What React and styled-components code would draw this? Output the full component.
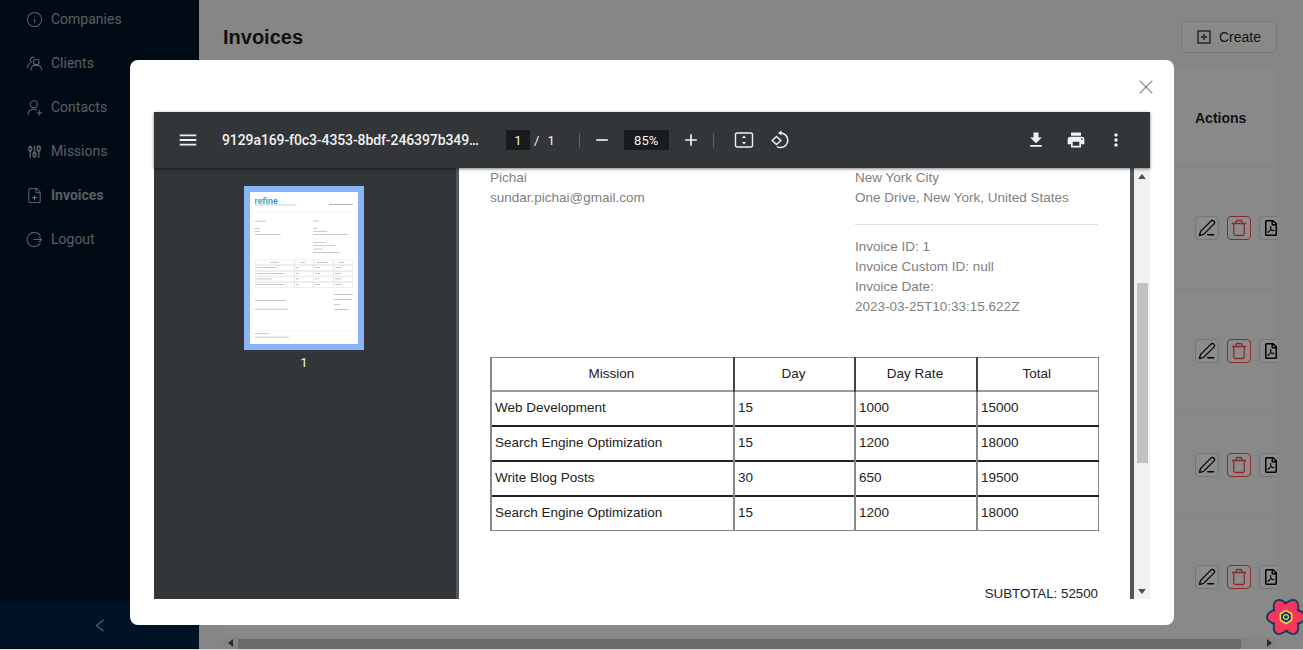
import React from 'react';
import styled, { createGlobalStyle } from 'styled-components';
import { Info, FilePlus, PenLine, Trash, X } from 'lucide-react';
import { TbChartCandle } from 'react-icons/tb';
import { FaRegFilePdf } from 'react-icons/fa';

const GlobalStyle = createGlobalStyle`
  html, body {
    margin: 0;
    padding: 0;
    height: 100%;
    overflow: hidden;
    background: #d8dcdc;
    font-family: "Liberation Sans", Arial, sans-serif;
  }
`;

const Layout = styled.div`
  display: flex;
  height: 649px;
  width: 1303px;
  background: #f5f5f5;
`;

const Sider = styled.aside`
  width: 199px;
  flex: none;
  background: #001529;
  display: flex;
  flex-direction: column;
  justify-content: space-between;
  overflow: hidden;
`;

const Menu = styled.nav`
  display: flex;
  flex-direction: column;
  gap: 4px;
  margin-top: -1px;
`;

const MenuItem = styled.div`
  height: 40px;
  display: flex;
  align-items: center;
  gap: 8px;
  padding-left: 26px;
  font: ${(p) => (p.$active ? 700 : 400)} 14px Roboto, sans-serif;
  color: rgba(255, 255, 255, 0.65);
`;

const Trigger = styled.div`
  height: 48px;
  background: #002140;
  display: flex;
  align-items: center;
  justify-content: center;
  color: rgba(255, 255, 255, 0.65);
`;

const Main = styled.main`
  flex: 1;
  min-width: 0;
  padding: 21px 26px 0 24px;
  display: flex;
  flex-direction: column;
`;

const PageHead = styled.header`
  display: flex;
  justify-content: space-between;
  align-items: center;
  height: 31px;
  margin-bottom: 17px;
`;

const Title = styled.h1`
  margin: 2px 0 0;
  font-size: 20px;
  font-weight: 700;
  color: rgba(0, 0, 0, 0.88);
`;

const CreateButton = styled.button`
  width: 96px;
  height: 32px;
  border: 1px solid #d9d9d9;
  border-radius: 6px;
  background: #fafafa;
  display: flex;
  align-items: center;
  justify-content: center;
  gap: 8px;
  font: 14px "Liberation Sans", sans-serif;
  color: rgba(0, 0, 0, 0.88);
  padding: 0;
`;

const Card = styled.section`
  flex: 1;
  min-height: 0;
  background: #fafafa;
  overflow: hidden;
  display: flex;
  flex-direction: column;
  align-items: flex-end;
`;

const Row = styled.div`
  width: 100%;
  height: ${(p) => p.$h}px;
  flex: none;
  box-sizing: border-box;
  border-bottom: 1px solid #eee;
  display: flex;
  align-items: center;
  padding-left: 972px;
  gap: 8px;
`;

const HeaderCell = styled.span`
  font-size: 14px;
  font-weight: 700;
  color: rgba(0, 0, 0, 0.88);
  position: relative;

  &::before {
    content: '';
    position: absolute;
    left: -17px;
    top: -3px;
    width: 1px;
    height: 23px;
    background: #f2f2f2;
  }
`;

const ActionButton = styled.button`
  width: 24px;
  height: 24px;
  flex: none;
  padding: 0;
  border-radius: 4px;
  border: 1px solid ${(p) => (p.$danger ? '#ff4d4f' : '#d9d9d9')};
  color: ${(p) => (p.$danger ? '#ff4d4f' : '#000')};
  background: #fff;
  display: flex;
  align-items: center;
  justify-content: center;
`;

const HScroll = styled.div`
  height: 12px;
  flex: none;
  background: #f1f1f1;
  display: flex;
  align-items: center;
  padding: 0 5px;
  box-sizing: border-box;
`;

const HThumb = styled.div`
  height: 10px;
  width: 1003px;
  margin: 2px 0 0 5px;
  background: #c1c1c1;
`;

const HArrow = styled.svg`
  width: 5px;
  height: 8px;
  fill: #505050;
  margin-left: ${(p) => (p.$end ? 'auto' : '0')};
`;

const Mask = styled.div`
  position: fixed;
  left: 0;
  top: 0;
  right: 0;
  height: 649px;
  background: rgba(0, 0, 0, 0.45);
`;

const Modal = styled.div`
  position: fixed;
  left: 130px;
  top: 60px;
  width: 1044px;
  height: 565px;
  box-sizing: border-box;
  padding: 52px 24px 26px;
  background: #fff;
  border-radius: 8px;
`;

const Close = styled.div`
  position: absolute;
  top: 15px;
  right: 16px;
  color: rgba(0, 0, 0, 0.45);
  display: flex;
`;

const Viewer = styled.div`
  height: 100%;
  display: flex;
  flex-direction: column;
  background: #323639;
`;

const Toolbar = styled.div`
  height: 56px;
  flex: none;
  display: flex;
  align-items: center;
  padding: 0 24px 0 23px;
  color: #f1f1f1;
  font: 13px Roboto, sans-serif;
  box-shadow: 0 1px 3px rgba(0, 0, 0, 0.5);
  position: relative;
  z-index: 1;
`;

const MatIcon = styled.svg`
  width: ${(p) => p.$size || 20}px;
  height: ${(p) => p.$size || 20}px;
  fill: ${(p) => (p.$outline ? 'none' : '#f1f1f1')};
  flex: none;
`;

const DocName = styled.span`
  width: 284px;
  flex: none;
  margin-left: 23px;
  font-size: 14px;
  font-weight: 500;
  letter-spacing: -0.1px;
  white-space: nowrap;
`;

const PageField = styled.span`
  width: 24px;
  height: 20px;
  background: #191b1c;
  display: flex;
  align-items: center;
  justify-content: center;
  margin-left: ${(p) => p.$ml || 0}px;
`;

const Slash = styled.span`
  margin-left: 4px;
  margin-right: 8px;
`;

const Sep = styled.span`
  width: 1px;
  height: 15px;
  background: #5f6368;
  margin: 0 ${(p) => p.$r || 12}px 0 ${(p) => p.$l || 24}px;
`;

const ZoomField = styled(PageField)`
  width: 45px;
`;

const Spacer = styled.span`
  flex: 1;
`;

const ToolGroup = styled.div`
  display: flex;
  align-items: center;
  gap: ${(p) => p.$gap}px;
  margin-left: ${(p) => p.$ml || 0}px;
`;

const ViewerBody = styled.div`
  flex: 1;
  min-height: 0;
  display: flex;
`;

const Thumbs = styled.div`
  width: 302px;
  flex: none;
  display: flex;
  flex-direction: column;
  align-items: center;
  padding: 18px 2px 0 0;
  box-sizing: border-box;
`;

const Thumb = styled.div`
  width: 120px;
  height: 164px;
  background: #8ab4f8;
  display: flex;
  align-items: center;
  justify-content: center;
`;

const ThumbSvg = styled.svg`
  width: 108px;
  height: 152px;
  background: #fff;
  filter: blur(0.35px);
`;

const ThumbNum = styled.div`
  margin-top: 5px;
  color: #f1f1f1;
  font: 13px Roboto, sans-serif;
`;

const PageArea = styled.div`
  flex: 1;
  min-width: 0;
  display: flex;
  background: #525659;
  padding-left: 3px;
`;

const Paper = styled.div`
  width: 671px;
  flex: none;
  background: #fff;
  overflow: hidden;
  box-sizing: border-box;
  padding: 0 32px 0 31px;
  font-size: 13.5px;
  color: #808080;
  line-height: 20px;
`;

const Columns = styled.div`
  display: flex;
`;

const LeftCol = styled.div`
  width: 365px;
  flex: none;
`;

const RightCol = styled.div`
  flex: 1;
`;

const Rule = styled.div`
  height: 1px;
  background: #ddd;
  margin: 16px 0 12px;
`;

const InvoiceTable = styled.table`
  width: 607px;
  margin-top: 40px;
  border-collapse: collapse;
  table-layout: fixed;
  color: #222;
`;

const Th = styled.th`
  font-weight: 400;
  height: 32px;
  padding: 0 2px 0 0;
  text-align: center;
  border: 1px solid #888;
  border-left: 2px solid ${(p) => (p.$first ? '#888' : '#444')};
`;

const Td = styled.td`
  height: 31px;
  padding: 0 4px 2px 3px;
  box-sizing: content-box;
  border: 1px solid #888;
  border-left-width: 2px;
  border-top: 2px solid ${(p) => (p.$dark ? '#222' : '#999')};
`;

const Subtotal = styled.div`
  margin-top: 53px;
  text-align: right;
  color: #222;
  font-size: 13.3px;
`;

const VScroll = styled.div`
  width: 16px;
  flex: none;
  margin-left: 4px;
  background: #f1f1f1;
  display: flex;
  flex-direction: column;
  align-items: center;
  position: relative;
`;

const ScrollArrow = styled.svg`
  width: 8px;
  height: 5px;
  fill: #505050;
  position: absolute;
  left: 4px;
  ${(p) => (p.$down ? 'bottom: 5px;' : 'top: 6px;')}
`;

const VThumb = styled.div`
  width: 11px;
  height: 180px;
  margin-top: 115px;
  background: #c1c1c1;
`;

const Atom = styled.svg`
  position: fixed;
  left: 1265px;
  top: 596px;
  width: 42px;
  height: 42px;
`;

const rows = [
  ['Web Development', '15', '1000', '15000'],
  ['Search Engine Optimization', '15', '1200', '18000'],
  ['Write Blog Posts', '30', '650', '19500'],
  ['Search Engine Optimization', '15', '1200', '18000'],
];

const LineIcon = ({ children }) => (
  <svg width="17" height="17" viewBox="0 0 24 24" fill="none" stroke="currentColor" strokeWidth="1.6" strokeLinecap="round">
    {children}
  </svg>
);

const nav = [
  ['Companies', <Info size={17} strokeWidth={1.5} />],
  ['Clients', (
    <LineIcon>
      <circle cx="14.5" cy="10" r="4" />
      <path d="M7 21c0-4 3-6.5 7.5-6.5S22 17 22 21" />
      <path d="M11.5 3.4A4 4 0 0 0 6 7a4 4 0 0 0 2 3.3M2 18c0-3 1.3-5 3.6-6" />
    </LineIcon>
  )],
  ['Contacts', (
    <LineIcon>
      <circle cx="11" cy="7.5" r="5" />
      <path d="M3 22c0-5 3.5-7.5 8-7.5 1.5 0 2.8.3 4 1M19 16.5v6M16 19.5h6" />
    </LineIcon>
  )],
  ['Missions', <TbChartCandle size={17} />],
  ['Invoices', <FilePlus size={17} strokeWidth={1.5} />, true],
  ['Logout', (
    <LineIcon>
      <path d="M20 6.5A10 10 0 1 0 20 17.5M11 12h11M19 9l3 3-3 3" />
    </LineIcon>
  )],
];

const tableRowsY = [68, 73.7, 79.3, 85, 90.7];
const tableColsX = [5.3, 44.7, 63.3, 83.3];
const tableColsW = [39.4, 18.6, 20, 19.4];

const Actions = () => (
  <>
    <ActionButton><PenLine size={18} strokeWidth={1.7} /></ActionButton>
    <ActionButton $danger><Trash size={18} strokeWidth={1.7} /></ActionButton>
    <ActionButton><FaRegFilePdf size={16} /></ActionButton>
  </>
);

const Material = ({ d, size }) => (
  <MatIcon viewBox="0 0 24 24" $size={size}><path d={d} /></MatIcon>
);

const thumbLines = [
  [4.7, 28.7, 11], [63.3, 28.7, 6],
  [4.7, 36, 5], [4.7, 39, 5], [4.7, 42, 26],
  [63.3, 36, 4], [63.3, 39, 14], [63.3, 42, 35],
  [63.3, 50, 12], [63.3, 53.3, 22], [63.3, 56.7, 9], [63.3, 60, 27],
  [4.7, 108, 31], [4.7, 116.7, 33],
  [84, 102, 19], [84, 107, 18], [84, 112, 6], [84, 117, 15],
  [4.7, 141.3, 14], [4.7, 144.7, 34],
  [6.5, 75, 20], [6.5, 81, 28], [6.5, 86.5, 16], [6.5, 92, 28],
  [46, 75, 3], [46, 81, 3], [46, 86.5, 3], [46, 92, 3],
  [65, 75, 5], [65, 81, 5], [65, 86.5, 4], [65, 92, 5],
  [85, 75, 6], [85, 81, 6], [85, 86.5, 6], [85, 92, 6],
  [20, 70, 9], [50, 70, 5], [67, 70, 11], [89, 70, 5],
];

const ThumbPage = () => (
  <ThumbSvg viewBox="0 0 108 152">
    <defs>
      <linearGradient id="logoFill" x1="0" x2="1" y1="0" y2="0">
        <stop offset="0" stopColor="#45c4a0" />
        <stop offset="1" stopColor="#3a8fe8" />
      </linearGradient>
    </defs>
    <text x="4.5" y="11.5" fontSize="9" fontWeight="700" fontFamily="Roboto, sans-serif" fill="url(#logoFill)">refine</text>
    <rect x="4.7" y="12.5" width="42" height="0.9" fill="#a8d8f0" />
    <rect x="79" y="12" width="24" height="0.9" fill="#aaa" />
    <rect x="5" y="20.3" width="98" height="0.4" fill="#eee" />
    <rect x="63" y="46.7" width="40" height="0.4" fill="#eee" />
    <rect x="5" y="138" width="98" height="0.4" fill="#eee" />
    {thumbLines.map(([x, y, w], i) => <rect key={i} x={x} y={y} width={w} height="0.8" fill="#bbb" />)}
    {tableRowsY.map((y) => tableColsX.map((x, i) => (
      <rect key={`${y}-${x}`} x={x} y={y} width={tableColsW[i]} height="4.6" fill="none" stroke="#ddd" strokeWidth="0.5" />
    )))}
  </ThumbSvg>
);

export default function App() {
  return (
    <>
      <GlobalStyle />
      <Layout>
        <Sider>
          <Menu>
            {nav.map(([label, icon, active]) => (
              <MenuItem key={label} $active={active}>{icon}{label}</MenuItem>
            ))}
          </Menu>
          <Trigger>
            <svg width="10" height="13" viewBox="0 0 10 13" fill="none" stroke="currentColor" strokeWidth="1.2">
              <path d="M8.5 1L1.5 6.5l7 5.5" />
            </svg>
          </Trigger>
        </Sider>
        <Main>
          <PageHead>
            <Title>Invoices</Title>
            <CreateButton>
              <svg width="14" height="14" viewBox="0 0 14 14" fill="none" stroke="currentColor">
                <rect x="1" y="1" width="12" height="12" strokeWidth="1.2" />
                <path d="M7 4v6M4 7h6" strokeWidth="1.8" opacity="0.7" />
              </svg>
              Create
            </CreateButton>
          </PageHead>
          <Card>
            <Row $h={99}><HeaderCell>Actions</HeaderCell></Row>
            <Row $h={121}><Actions /></Row>
            <Row $h={125}><Actions /></Row>
            <Row $h={102}><Actions /></Row>
            <Row $h={122}><Actions /></Row>
          </Card>
          <HScroll>
            <HArrow viewBox="0 0 5 8"><path d="M0 4l5-4v8z" /></HArrow>
            <HThumb />
            <HArrow $end viewBox="0 0 5 8"><path d="M5 4L0 0v8z" /></HArrow>
          </HScroll>
        </Main>
      </Layout>
      <Mask />
      <Modal>
        <Close><X size={24} strokeWidth={1.1} /></Close>
        <Viewer>
          <Toolbar>
            <Material size={22} d="M3 18h18v-2H3v2zm0-5h18v-2H3v2zm0-7v2h18V6H3z" />
            <DocName>9129a169-f0c3-4353-8bdf-246397b349…</DocName>
            <PageField>1</PageField>
            <Slash>/</Slash>
            <span>1</span>
            <Sep />
            <Material size={20} d="M19 13H5v-2h14v2z" />
            <ZoomField $ml={12}>85%</ZoomField>
            <ToolGroup $ml={12}>
              <Material size={20} d="M19 13h-6v6h-2v-6H5v-2h6V5h2v6h6v2z" />
            </ToolGroup>
            <Sep $l={12} $r={20} />
            <ToolGroup $gap={16}>
              <MatIcon viewBox="0 0 20 20" $size={20} $outline>
                <rect x="1.5" y="3" width="17" height="14" rx="1.5" stroke="#f1f1f1" strokeWidth="1.4" />
                <path d="M10 5.5l2 2.5H8zM10 14.5l2-2.5H8z" fill="#f1f1f1" />
              </MatIcon>
              <MatIcon viewBox="0 0 20 20" $size={20} $outline>
                <path d="M10.5 3a7.3 7.3 0 1 1 0 14.6 7.3 7.3 0 0 1-3.6-1" stroke="#f1f1f1" strokeWidth="1.5" />
                <path d="M11.5 0.5L8 3l3.5 2.5z" fill="#f1f1f1" />
                <path d="M6.5 6.5L2.2 10.5l4.3 4 4.3-4z" stroke="#f1f1f1" strokeWidth="1.5" />
              </MatIcon>
            </ToolGroup>
            <Spacer />
            <ToolGroup $gap={20}>
              <Material size={20} d="M19 9h-4V3H9v6H5l7 7 7-7zM5 18v2h14v-2H5z" />
              <Material size={20} d="M19 8H5c-1.66 0-3 1.34-3 3v6h4v4h12v-4h4v-6c0-1.66-1.34-3-3-3zm-3 11H8v-5h8v5zm3-7c-.55 0-1-.45-1-1s.45-1 1-1 1 .45 1 1-.45 1-1 1zm-1-9H6v4h12V3z" />
              <Material size={20} d="M12 8c1.1 0 2-.9 2-2s-.9-2-2-2-2 .9-2 2 .9 2 2 2zm0 2c-1.1 0-2 .9-2 2s.9 2 2 2 2-.9 2-2-.9-2-2-2zm0 6c-1.1 0-2 .9-2 2s.9 2 2 2 2-.9 2-2-.9-2-2-2z" />
            </ToolGroup>
          </Toolbar>
          <ViewerBody>
            <Thumbs>
              <Thumb><ThumbPage /></Thumb>
              <ThumbNum>1</ThumbNum>
            </Thumbs>
            <PageArea>
              <Paper>
                <Columns>
                  <LeftCol>
                    <div>Pichai</div>
                    <div>sundar.pichai@gmail.com</div>
                  </LeftCol>
                  <RightCol>
                    <div>New York City</div>
                    <div>One Drive, New York, United States</div>
                    <Rule />
                    <div>Invoice ID: 1</div>
                    <div>Invoice Custom ID: null</div>
                    <div>Invoice Date:</div>
                    <div>2023-03-25T10:33:15.622Z</div>
                  </RightCol>
                </Columns>
                <InvoiceTable>
                  <colgroup>
                    <col width="243" />
                    <col width="121" />
                    <col width="122" />
                    <col width="121" />
                  </colgroup>
                  <thead>
                    <tr>
                      <Th $first>Mission</Th>
                      <Th>Day</Th>
                      <Th>Day Rate</Th>
                      <Th>Total</Th>
                    </tr>
                  </thead>
                  <tbody>
                    {rows.map((row, i) => (
                      <tr key={i}>
                        {row.map((cell, j) => <Td key={j} $dark={i > 0}>{cell}</Td>)}
                      </tr>
                    ))}
                  </tbody>
                </InvoiceTable>
                <Subtotal>SUBTOTAL: 52500</Subtotal>
              </Paper>
              <VScroll>
                <ScrollArrow viewBox="0 0 8 5"><path d="M4 0l4 5H0z" /></ScrollArrow>
                <VThumb />
                <ScrollArrow $down viewBox="0 0 8 5"><path d="M0 0h8L4 5z" /></ScrollArrow>
              </VScroll>
            </PageArea>
          </ViewerBody>
        </Viewer>
      </Modal>
      <Atom viewBox="-21 -21 42 42">
        <g fill="#f4375a" stroke="#0d3a63" strokeWidth="1.8">
          <ellipse rx="19" ry="9" />
          <ellipse rx="19" ry="9" transform="rotate(60)" />
          <ellipse rx="19" ry="9" transform="rotate(-60)" />
        </g>
        <g fill="#f4375a">
          <ellipse rx="16" ry="8" />
          <ellipse rx="16" ry="8" transform="rotate(60)" />
          <ellipse rx="16" ry="8" transform="rotate(-60)" />
        </g>
        <path d="M0-6.5L5.6-3.2V3.2L0 6.5-5.6 3.2V-3.2z" fill="#0d3a63" stroke="#e8d44d" strokeWidth="1.6" />
        <circle r="2.4" fill="none" stroke="#e8d44d" strokeWidth="1.3" />
      </Atom>
    </>
  );
}
